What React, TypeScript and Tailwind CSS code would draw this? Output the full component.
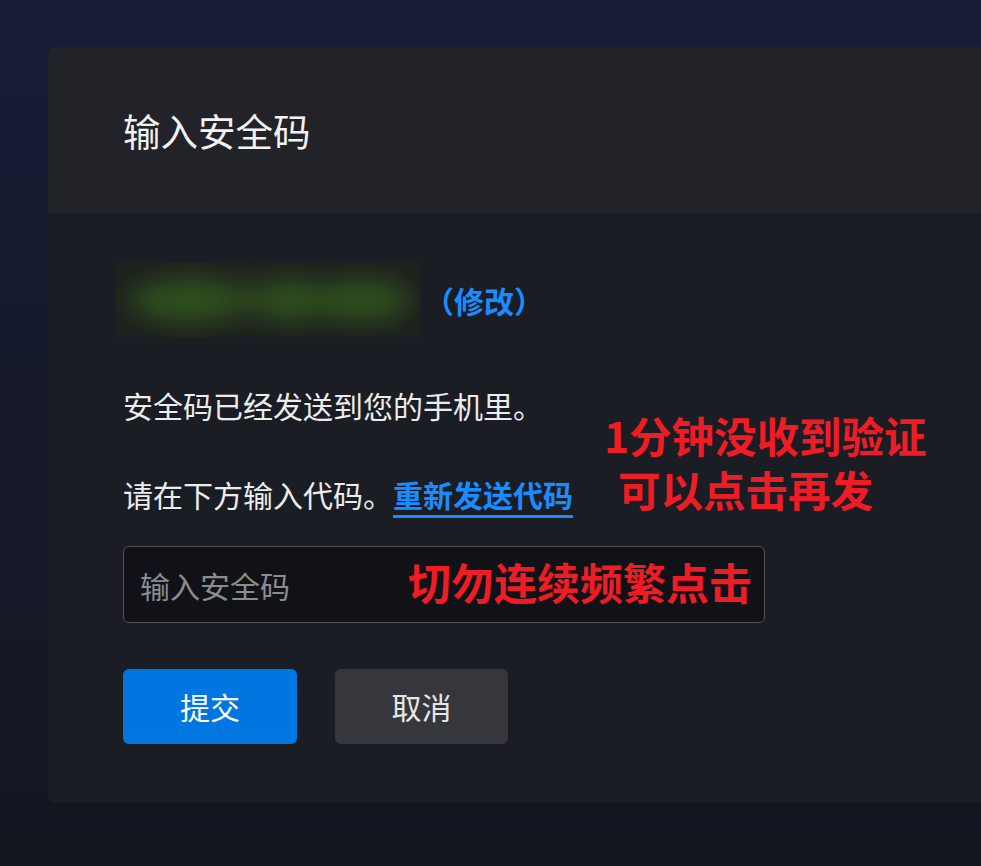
import React from "react";

const font = { fontFamily: '"Noto Sans CJK SC", "Noto Sans", sans-serif' };

function BlurredPhone() {
  return (
    <svg width="305" height="75" viewBox="0 0 305 75" className="block">
      <defs>
        <filter id="b" x="-50%" y="-50%" width="200%" height="200%">
          <feGaussianBlur stdDeviation="12" />
        </filter>
      </defs>
      <rect x="0" y="0" width="305" height="75" fill="#1e221f" />
      <g filter="url(#b)">
        <ellipse cx="75" cy="38" rx="58" ry="20" fill="#335a1f" />
        <ellipse cx="175" cy="38" rx="42" ry="19" fill="#30551d" />
        <ellipse cx="245" cy="38" rx="48" ry="19" fill="#325a1e" />
        <rect x="18" y="24" width="262" height="26" fill="#2c4a1c" opacity="0.6" />
      </g>
    </svg>
  );
}

export default function App() {
  return (
    <div
      className="relative h-[866px] w-full overflow-hidden bg-gradient-to-b from-[#181c38] via-[#161a2b] to-[#13161f] pl-[48px] pt-[47px]"
      style={font}
    >
      <div className="w-[1000px] overflow-hidden rounded-[7px] bg-[#1b1d24]">
        <div className="flex h-[166px] items-center bg-[#212329] pl-[75px]">
          <h1 className="text-[37.5px] leading-none text-[#f2f2f2]">输入安全码</h1>
        </div>
        <div className="pl-[75px] pt-[49px] pb-[59px]">
          <div className="ml-[-8px] flex h-[75px] items-center">
            <BlurredPhone />
            <span className="ml-[4px] text-[30px] font-bold leading-none text-[#1a8cff]">（修改）</span>
          </div>
          <p className="mt-[48px] text-[30px] leading-[40px] text-[#ececec]">安全码已经发送到您的手机里。</p>
          <p className="mt-[49px] text-[30px] leading-[40px] text-[#ececec]">
            请在下方输入代码。
            <span className="font-bold text-[#1a8cff] underline decoration-[3px] underline-offset-[8px]">重新发送代码</span>
          </p>
          <div className="mt-[32px] flex h-[77px] w-[642px] items-center rounded-[6px] border border-[#505257] bg-[#111218] pl-[16px]">
            <span className="text-[30px] leading-none text-[#8b8c90]">输入安全码</span>
          </div>
          <div className="mt-[46px] flex gap-[38px]">
            <button className="flex h-[75px] w-[174px] items-center justify-center rounded-[6px] bg-[#0077e0] text-[30px] text-white">
              提交
            </button>
            <button className="flex h-[75px] w-[173px] items-center justify-center rounded-[6px] bg-[#36373c] text-[30px] text-[#e6e6e6]">
              取消
            </button>
          </div>
        </div>
      </div>

      <div className="absolute left-[604px] top-[408px] w-[330px] pl-[14px] -indent-[14px] text-[42.5px] font-bold leading-[54px] text-[#ee1c25]">
        1分钟没收到验证 可以点击再发
      </div>
      <div className="absolute left-[408px] top-[560px] text-[43px] font-bold leading-none text-[#ee1c25]">切勿连续频繁点击</div>
    </div>
  );
}
